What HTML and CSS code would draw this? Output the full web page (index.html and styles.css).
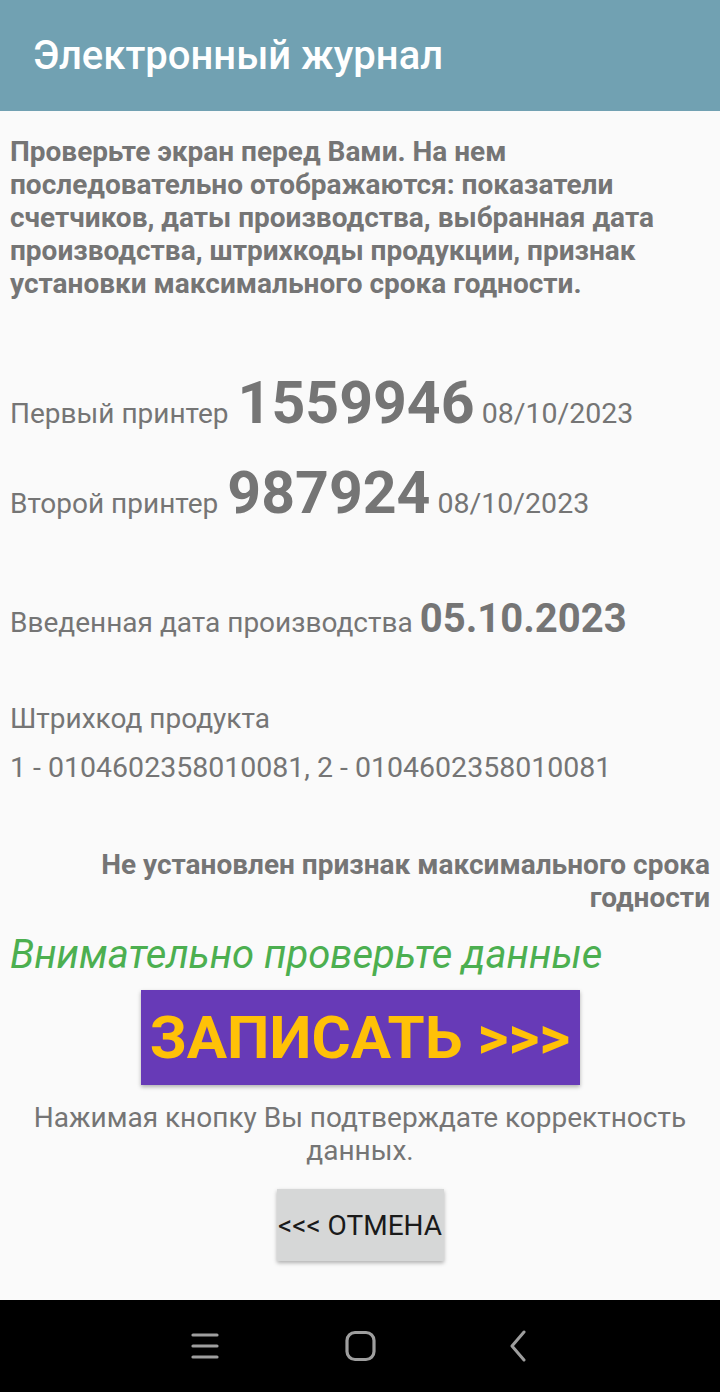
FILE: index.html
```html
<!DOCTYPE html>
<html lang="ru">
<head>
<meta charset="utf-8">
<link rel="stylesheet" href="styles.css">
</head>
<body>
<div class="screen">
  <header class="appbar"><h1 class="title">Электронный журнал</h1></header>
  <main class="content">
    <p class="intro">Проверьте экран перед Вами. На нем последовательно отображаются: показатели счетчиков, даты производства, выбранная дата производства, штрихкоды продукции, признак установки максимального срока годности.</p>
    <div class="printer p1"><span class="label">Первый принтер</span> <span class="count">1559946</span> <span class="date">08/10/2023</span></div>
    <div class="printer p2"><span class="label">Второй принтер</span> <span class="count">987924</span> <span class="date">08/10/2023</span></div>
    <div class="entered"><span class="label">Введенная дата производства</span> <span class="edate">05.10.2023</span></div>
    <div class="barcode-title">Штрихкод продукта</div>
    <div class="barcodes">1 - 0104602358010081, 2 - 0104602358010081</div>
    <div class="flag">Не установлен признак максимального срока годности</div>
    <div class="warn">Внимательно проверьте данные</div>
    <div class="actions">
      <button class="btn-save">ЗАПИСАТЬ &gt;&gt;&gt;</button>
      <p class="note">Нажимая кнопку Вы подтверждате корректность данных.</p>
      <button class="btn-cancel">&lt;&lt;&lt; ОТМЕНА</button>
    </div>
  </main>
  <nav class="navbar">
    <svg class="nav-icon nav-menu" width="28" height="28" viewBox="0 0 28 28"><g stroke="#9e9e9e" stroke-width="3.2" stroke-linecap="round"><line x1="2" y1="3" x2="26" y2="3"/><line x1="2" y1="14" x2="26" y2="14"/><line x1="2" y1="25" x2="26" y2="25"/></g></svg>
    <svg class="nav-icon nav-home" width="32" height="32" viewBox="0 0 32 32"><rect x="2" y="2.5" width="27" height="27" rx="8" fill="none" stroke="#9e9e9e" stroke-width="3.2"/></svg>
    <svg class="nav-icon nav-back" width="22" height="32" viewBox="0 0 22 32"><polyline points="17,2 5,16 17,30" fill="none" stroke="#9e9e9e" stroke-width="3" stroke-linecap="round" stroke-linejoin="round"/></svg>
  </nav>
</div>
</body>
</html>
```

FILE: styles.css
```css
* { box-sizing: border-box; }
html, body { margin: 0; padding: 0; }
body { background: #fafafa; font-family: Roboto, "Noto Sans", sans-serif; color: #757575; }
.screen { width: 720px; height: 1392px; display: flex; flex-direction: column; overflow: hidden; }
.appbar { height: 111px; background: #71a1b2; display: flex; align-items: center; padding: 0 0 0 33px; flex: none; }
.title { margin: 0; font-size: 40px; font-weight: 500; color: #fff; }
.content { flex: 1; padding: 0 10px; display: flex; flex-direction: column; }
.intro { margin: 24px 0 0; font-size: 28px; font-weight: 700; line-height: 33px; }
.printer { font-size: 28.5px; line-height: 1; }
.label { font-size: 28px; }
.p1 { margin-top: 73px; }
.p2 { margin-top: 31px; }
.count { font-size: 59px; font-weight: 700; margin-left: 2px; }
.entered { margin-top: 73px; font-size: 28.5px; }
.edate { font-size: 40px; font-weight: 700; }
.barcode-title { margin-top: 60px; font-size: 28px; }
.barcodes { margin-top: 16px; font-size: 28.5px; }
.flag { margin-top: 64px; font-size: 28px; font-weight: 700; line-height: 33px; text-align: right; }
.warn { margin-top: 17px; font-size: 40px; font-style: italic; color: #4caf50; }
.actions { display: flex; flex-direction: column; align-items: center; }
.btn-save { margin-top: 12px; width: 439px; height: 95px; border: 0; background: #673ab7; color: #ffc107; font-family: Roboto, sans-serif; font-weight: 700; font-size: 60px; box-shadow: 0 2px 4px rgba(0,0,0,0.3); padding: 0; }
.note { margin: 16px 0 0; font-size: 28px; line-height: 33px; text-align: center; }
.btn-cancel { margin-top: 22px; width: 167px; height: 72px; border: 0; background: #d6d7d7; color: #1a1a1a; font-family: Roboto, sans-serif; font-size: 28px; padding: 0; box-shadow: 0 2px 4px rgba(0,0,0,0.3); }
.navbar { height: 92px; background: #000; flex: none; display: flex; align-items: center; justify-content: center; }
.nav-menu { margin-right: 126px; }
.nav-back { margin-left: 130px; }
```
